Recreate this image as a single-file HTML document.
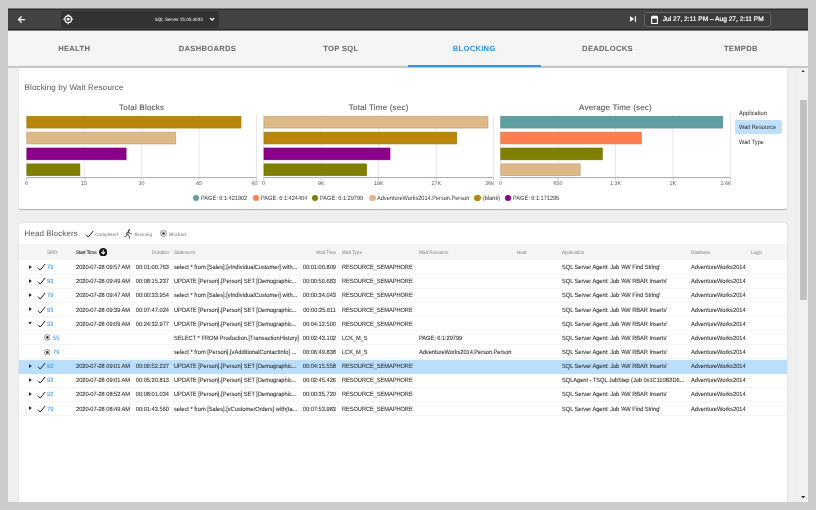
<!DOCTYPE html>
<html><head><meta charset="utf-8"><title>Blocking</title>
<style>
*{box-sizing:border-box;margin:0;padding:0}
html,body{text-rendering:geometricPrecision;width:816px;height:510px;overflow:hidden;background:#cccccc;font-family:"Liberation Sans", sans-serif;}
.a{position:absolute}
.t{position:absolute;white-space:nowrap;line-height:1}
#app{will-change:transform;position:absolute;left:8px;top:8px;width:800px;height:494px;background:#efefef;overflow:hidden}
#top{z-index:2;position:absolute;left:0;top:0;width:800px;height:24px}
#tabs{position:absolute;left:0;top:22px;width:800px;height:36px;background:#f5f5f5}
#tabline{z-index:5;position:absolute;left:0;top:57.6px;width:800px;height:2.1px;background:#c6c6c6}
.tab{position:absolute;top:0;width:133.33px;height:36px;text-align:center;font-weight:bold;font-size:7.6px;letter-spacing:.3px;color:#666;line-height:37px}
.tab.on{color:#2c92e8}
.card{position:absolute;background:#fff;border-radius:2px;box-shadow:0 .6px 1.2px rgba(0,0,0,.28)}
.bar{position:absolute;height:12.5px;border:.6px solid rgba(0,0,0,.13)}
.grid{position:absolute;width:.7px;background:#e9e9e9}
.axis{position:absolute;height:.9px;background:#a0a0a0}
.tick{position:absolute;width:.6px;height:1.6px;background:#aaa}
.tl{position:absolute;font-size:5.4px;color:#555;white-space:nowrap;line-height:1;transform:translateX(-50%)}
.ct{position:absolute;font-size:8px;letter-spacing:.2px;color:#555;-webkit-text-stroke:.1px #555;white-space:nowrap;line-height:1;transform:translateX(-50%)}
.dot{position:absolute;width:6.6px;height:6.6px;border-radius:50%}
.lg{position:absolute;font-size:6.1px;color:#333;transform:scaleX(.918);transform-origin:0 50%;white-space:nowrap;line-height:1}
.row{position:absolute;left:11px;width:768px;height:14.2px;border-bottom:.6px solid #f5f5f5}
.c{position:absolute;font-size:6.1px;color:#303030;-webkit-text-stroke:.08px currentColor;transform:scaleX(.934);transform-origin:0 50%;white-space:nowrap;line-height:1}
.h{position:absolute;font-size:5.1px;color:#828282;transform:scaleX(.89);transform-origin:0 50%;white-space:nowrap;line-height:1}
.r{transform:translateX(-100%)}
.c.r{transform:translateX(-100%) scaleX(.934);transform-origin:100% 50%}
.h.r{transform:translateX(-100%) scaleX(.89);transform-origin:100% 50%}
.b{color:#3f9dee}
</style></head>
<body>
<div id="app">
<div id="top">
<svg class="a" style="left:0;top:0;width:800px;height:24px" viewBox="0 0 800 24"><rect x="0" y="0.4" width="800" height="22" fill="#434343"/><rect x="0" y="0.85" width="800" height="1.1" fill="#2e2e2e"/><rect x="0" y="20.9" width="800" height="1.5" fill="#2c2c2c"/></svg>
<svg class="a" style="left:9.4px;top:6.9px;width:9.2px;height:9.2px" viewBox="0 0 24 24"><path d="M21 12H4.5M12 4l-8 8 8 8" fill="none" stroke="#fff" stroke-width="3.4"/></svg>
<div class="a" style="left:53px;top:2.7px;width:158px;height:17px;background:#333;border-radius:2px"></div>
<svg class="a" style="left:54.5px;top:6.3px;width:10.4px;height:10.4px" viewBox="0 0 24 24"><circle cx="12" cy="12" r="7.6" fill="none" stroke="#fff" stroke-width="2.8"/><circle cx="12" cy="12" r="3.3" fill="#fff"/><path d="M12 .6v3.6M12 19.8v3.6M.6 12h3.6M19.8 12h3.6" stroke="#fff" stroke-width="2.8"/></svg>
<div class="t" style="left:146.7px;top:10.3px;font-size:4.6px;color:#f2f2f2">SQL Server 15.00.4033</div>
<svg class="a" style="left:201.4px;top:8.1px;width:6.2px;height:6.2px" viewBox="0 0 24 24"><path d="M4 8l8 8 8-8" fill="none" stroke="#fff" stroke-width="5"/></svg>
<svg class="a" style="left:621.6px;top:8.4px;width:6.5px;height:6px" viewBox="0 0 14 12"><path d="M0 0l9 6-9 6z" fill="#fff"/><rect x="10.5" y="0" width="2.6" height="12" fill="#fff"/></svg>
<div class="a" style="left:636px;top:4px;width:127.3px;height:15.3px;border:.8px solid #646464;border-radius:3px;background:#3c3c3c"></div>
<svg class="a" style="left:642.6px;top:6.5px;width:7px;height:9.6px" viewBox="0 0 14 19"><rect x="1.2" y="3.2" width="11.6" height="14" rx="1.5" fill="none" stroke="#fff" stroke-width="2.2"/><rect x="1.2" y="3.2" width="11.6" height="4" fill="#fff"/><rect x="3.2" y="0.5" width="2" height="4" fill="#fff"/><rect x="8.8" y="0.5" width="2" height="4" fill="#fff"/></svg>
<div class="t" style="left:654.8px;top:9.2px;font-size:6.6px;color:#fff;-webkit-text-stroke:.22px #fff">Jul 27, 2:11 PM &ndash; Aug 27, 2:11 PM</div>
</div>
<div id="tabs">
<div class="tab" style="left:-0.50px">HEALTH</div>
<div class="tab" style="left:132.83px">DASHBOARDS</div>
<div class="tab" style="left:266.17px">TOP SQL</div>
<div class="tab on" style="left:399.50px">BLOCKING</div>
<div class="tab" style="left:532.83px">DEADLOCKS</div>
<div class="tab" style="left:666.16px">TEMPDB</div>
</div>
<div id="tabline"></div>
<div class="a" style="z-index:6;left:399.6px;top:56.6px;width:133.5px;height:2.3px;background:#3394e6"></div>
<div class="a" style="left:791px;top:60px;width:9px;height:434px;background:#f1f1f1"></div>
<div class="a" style="left:791.5px;top:92px;width:7.6px;height:200.4px;background:#c1c1c1"></div>
<svg class="a" style="left:793.2px;top:61.8px;width:4.2px;height:2.5px" viewBox="0 0 10 6"><path d="M0 6l5-6 5 6z" fill="#333"/></svg>
<svg class="a" style="left:793.2px;top:487.8px;width:4.2px;height:2.5px" viewBox="0 0 10 6"><path d="M0 0l5 6 5-6z" fill="#333"/></svg>
<div class="card" style="left:11px;top:58px;width:768px;height:143px;border-radius:0 0 2px 2px"></div>
<div class="t" style="left:16.5px;top:75.6px;font-size:8px;letter-spacing:.15px;color:#555">Blocking by Wait Resource</div>
<div class="ct" style="left:133.6px;top:95.9px">Total Blocks</div>
<div class="tl" style="left:18.60px;top:173.5px">0</div>
<div class="tl" style="left:76.10px;top:173.5px">15</div>
<div class="tl" style="left:133.60px;top:173.5px">30</div>
<div class="tl" style="left:191.10px;top:173.5px">45</div>
<div class="tl" style="left:249.60px;top:173.5px;transform:translateX(-100%)">60</div>
<div class="ct" style="left:370.7px;top:95.9px">Total Time (sec)</div>
<div class="tl" style="left:255.70px;top:173.5px">0</div>
<div class="tl" style="left:313.20px;top:173.5px">9K</div>
<div class="tl" style="left:370.70px;top:173.5px">18K</div>
<div class="tl" style="left:428.20px;top:173.5px">27K</div>
<div class="tl" style="left:486.70px;top:173.5px;transform:translateX(-100%)">36K</div>
<div class="ct" style="left:607.5px;top:95.9px">Average Time (sec)</div>
<div class="tl" style="left:492.50px;top:173.5px">0</div>
<div class="tl" style="left:550.00px;top:173.5px">650</div>
<div class="tl" style="left:607.50px;top:173.5px">1.3K</div>
<div class="tl" style="left:665.00px;top:173.5px">2K</div>
<div class="tl" style="left:723.50px;top:173.5px;transform:translateX(-100%)">2.6K</div>
<svg class="a" style="left:0;top:0;width:800px;height:494px" viewBox="0 0 800 494"><rect x="18.25" y="106.4" width=".7" height="63" fill="#dedede"/><rect x="18.30" y="170" width=".6" height="1.6" fill="#aaa"/><rect x="75.75" y="106.4" width=".7" height="63" fill="#dedede"/><rect x="75.80" y="170" width=".6" height="1.6" fill="#aaa"/><rect x="133.25" y="106.4" width=".7" height="63" fill="#dedede"/><rect x="133.30" y="170" width=".6" height="1.6" fill="#aaa"/><rect x="190.75" y="106.4" width=".7" height="63" fill="#dedede"/><rect x="190.80" y="170" width=".6" height="1.6" fill="#aaa"/><rect x="248.25" y="106.4" width=".7" height="63" fill="#dedede"/><rect x="248.30" y="170" width=".6" height="1.6" fill="#aaa"/><rect x="18.6" y="169.2" width="230" height=".9" fill="#a0a0a0"/><rect x="18.90" y="108.25" width="214.10" height="11.8" fill="#b8860b" stroke="#b8860b" stroke-width=".6"/><rect x="18.90" y="108.25" width="214.10" height="11.8" fill="none" stroke="rgba(0,0,0,.13)" stroke-width=".6"/><rect x="18.90" y="124.13" width="148.90" height="11.8" fill="#deb887" stroke="#deb887" stroke-width=".6"/><rect x="18.90" y="124.13" width="148.90" height="11.8" fill="none" stroke="rgba(0,0,0,.13)" stroke-width=".6"/><rect x="18.90" y="140.01" width="99.20" height="11.8" fill="#8b008b" stroke="#8b008b" stroke-width=".6"/><rect x="18.90" y="140.01" width="99.20" height="11.8" fill="none" stroke="rgba(0,0,0,.13)" stroke-width=".6"/><rect x="18.90" y="155.89" width="53.00" height="11.8" fill="#808000" stroke="#808000" stroke-width=".6"/><rect x="18.90" y="155.89" width="53.00" height="11.8" fill="none" stroke="rgba(0,0,0,.13)" stroke-width=".6"/><rect x="255.35" y="106.4" width=".7" height="63" fill="#dedede"/><rect x="255.40" y="170" width=".6" height="1.6" fill="#aaa"/><rect x="312.85" y="106.4" width=".7" height="63" fill="#dedede"/><rect x="312.90" y="170" width=".6" height="1.6" fill="#aaa"/><rect x="370.35" y="106.4" width=".7" height="63" fill="#dedede"/><rect x="370.40" y="170" width=".6" height="1.6" fill="#aaa"/><rect x="427.85" y="106.4" width=".7" height="63" fill="#dedede"/><rect x="427.90" y="170" width=".6" height="1.6" fill="#aaa"/><rect x="485.35" y="106.4" width=".7" height="63" fill="#dedede"/><rect x="485.40" y="170" width=".6" height="1.6" fill="#aaa"/><rect x="255.7" y="169.2" width="230" height=".9" fill="#a0a0a0"/><rect x="256.00" y="108.25" width="224.00" height="11.8" fill="#deb887" stroke="#deb887" stroke-width=".6"/><rect x="256.00" y="108.25" width="224.00" height="11.8" fill="none" stroke="rgba(0,0,0,.13)" stroke-width=".6"/><rect x="256.00" y="124.13" width="192.70" height="11.8" fill="#b8860b" stroke="#b8860b" stroke-width=".6"/><rect x="256.00" y="124.13" width="192.70" height="11.8" fill="none" stroke="rgba(0,0,0,.13)" stroke-width=".6"/><rect x="256.00" y="140.01" width="126.00" height="11.8" fill="#8b008b" stroke="#8b008b" stroke-width=".6"/><rect x="256.00" y="140.01" width="126.00" height="11.8" fill="none" stroke="rgba(0,0,0,.13)" stroke-width=".6"/><rect x="256.00" y="155.89" width="102.60" height="11.8" fill="#808000" stroke="#808000" stroke-width=".6"/><rect x="256.00" y="155.89" width="102.60" height="11.8" fill="none" stroke="rgba(0,0,0,.13)" stroke-width=".6"/><rect x="492.15" y="106.4" width=".7" height="63" fill="#dedede"/><rect x="492.20" y="170" width=".6" height="1.6" fill="#aaa"/><rect x="549.65" y="106.4" width=".7" height="63" fill="#dedede"/><rect x="549.70" y="170" width=".6" height="1.6" fill="#aaa"/><rect x="607.15" y="106.4" width=".7" height="63" fill="#dedede"/><rect x="607.20" y="170" width=".6" height="1.6" fill="#aaa"/><rect x="664.65" y="106.4" width=".7" height="63" fill="#dedede"/><rect x="664.70" y="170" width=".6" height="1.6" fill="#aaa"/><rect x="722.15" y="106.4" width=".7" height="63" fill="#dedede"/><rect x="722.20" y="170" width=".6" height="1.6" fill="#aaa"/><rect x="492.5" y="169.2" width="230" height=".9" fill="#a0a0a0"/><rect x="492.80" y="108.25" width="222.00" height="11.8" fill="#5f9ea0" stroke="#5f9ea0" stroke-width=".6"/><rect x="492.80" y="108.25" width="222.00" height="11.8" fill="none" stroke="rgba(0,0,0,.13)" stroke-width=".6"/><rect x="492.80" y="124.13" width="140.50" height="11.8" fill="#ff7f50" stroke="#ff7f50" stroke-width=".6"/><rect x="492.80" y="124.13" width="140.50" height="11.8" fill="none" stroke="rgba(0,0,0,.13)" stroke-width=".6"/><rect x="492.80" y="140.01" width="101.50" height="11.8" fill="#808000" stroke="#808000" stroke-width=".6"/><rect x="492.80" y="140.01" width="101.50" height="11.8" fill="none" stroke="rgba(0,0,0,.13)" stroke-width=".6"/><rect x="492.80" y="155.89" width="79.40" height="11.8" fill="#deb887" stroke="#deb887" stroke-width=".6"/><rect x="492.80" y="155.89" width="79.40" height="11.8" fill="none" stroke="rgba(0,0,0,.13)" stroke-width=".6"/></svg>
<div class="dot" style="left:184.6px;top:186.9px;background:#5f9ea0"></div>
<div class="lg" style="left:192.9px;top:187.6px">PAGE: 6:1:421902</div>
<div class="dot" style="left:244.7px;top:186.9px;background:#ff7f50"></div>
<div class="lg" style="left:253.0px;top:187.6px">PAGE: 6:1:424404</div>
<div class="dot" style="left:303.8px;top:186.9px;background:#808000"></div>
<div class="lg" style="left:312.3px;top:187.6px">PAGE: 6:1:29799</div>
<div class="dot" style="left:361.0px;top:186.9px;background:#deb887"></div>
<div class="lg" style="left:368.8px;top:187.6px">AdventureWorks2014.Person.Person</div>
<div class="dot" style="left:466.4px;top:186.9px;background:#b8860b"></div>
<div class="lg" style="left:474.9px;top:187.6px">(blank)</div>
<div class="dot" style="left:496.8px;top:186.9px;background:#8b008b"></div>
<div class="lg" style="left:505.0px;top:187.6px">PAGE: 6:1:171295</div>
<div class="a" style="left:727.3px;top:112.2px;width:46.7px;height:13.6px;background:#bfdffb;border-radius:2px"></div>
<div class="t" style="left:731.1px;top:103.0px;font-size:6.1px;color:#2a2a2a;transform:scaleX(.934);transform-origin:0 50%">Application</div>
<div class="t" style="left:731.1px;top:117.3px;font-size:6.1px;color:#2a2a2a;transform:scaleX(.934);transform-origin:0 50%">Wait Resource</div>
<div class="t" style="left:731.1px;top:131.6px;font-size:6.1px;color:#2a2a2a;transform:scaleX(.934);transform-origin:0 50%">Wait Type</div>
<div class="card" style="left:11px;top:215px;width:768px;height:290px"></div>
<div class="t" style="left:16.5px;top:222.1px;font-size:8px;letter-spacing:.1px;color:#555">Head Blockers</div>
<svg class="a" style="left:77.4px;top:222.4px;width:8.8px;height:7.5px" viewBox="0 0 14 12"><path d="M1.5 7.5l3.6 3.8L13 1.6" fill="none" stroke="#222" stroke-width="1.6"/></svg>
<div class="t" style="left:87.2px;top:224.8px;font-size:4.7px;color:#777">Completed</div>
<svg class="a" style="left:116.4px;top:220.8px;width:8.4px;height:9.8px" viewBox="0 0 24 28"><circle cx="14.5" cy="3.5" r="2.6" fill="#333"/><path d="M13 8l-5 2.5-1.5 5M13 8l-2.5 8 4.5 4 1 6.5M10.5 16L7 20.5 2.5 21M13 8l4 5 4.5 1" fill="none" stroke="#333" stroke-width="2.4" stroke-linecap="round" stroke-linejoin="round"/></svg>
<div class="t" style="left:126.6px;top:224.8px;font-size:4.7px;color:#777">Running</div>
<svg class="a" style="left:151.5px;top:222.2px;width:7px;height:7px" viewBox="0 0 14 14"><circle cx="7" cy="7" r="5.8" fill="none" stroke="#3a3a3a" stroke-width="1.15"/><circle cx="7" cy="7" r="2.7" fill="#333"/></svg>
<div class="t" style="left:161.2px;top:224.8px;font-size:4.7px;color:#777">Blocked</div>
<div class="a" style="left:11px;top:235.8px;width:768px;height:16.6px;background:#f5f5f5"></div>
<div class="h" style="left:39.1px;top:243.0px">SPID</div>
<div class="h" style="left:68px;top:243.0px;color:#2a2a2a;-webkit-text-stroke:.12px #2a2a2a">Start Time</div>
<svg class="a" style="left:91.1px;top:240.0px;width:8.4px;height:8.4px" viewBox="0 0 24 24"><circle cx="12" cy="12" r="12" fill="#111"/><path d="M12 5v11M6.5 11.5L12 17l5.5-5.5" fill="none" stroke="#fff" stroke-width="3"/></svg>
<div class="h r" style="left:160.5px;top:243.0px">Duration</div>
<div class="h" style="left:166.3px;top:243.0px">Statement</div>
<div class="h r" style="left:328.2px;top:243.0px">Wait Time</div>
<div class="h" style="left:334.3px;top:243.0px">Wait Type</div>
<div class="h" style="left:410.8px;top:243.0px">Wait Resource</div>
<div class="h" style="left:509.29999999999995px;top:243.0px">Host</div>
<div class="h" style="left:553.8px;top:243.0px">Application</div>
<div class="h" style="left:683.1px;top:243.0px">Database</div>
<div class="h" style="left:743px;top:243.0px">Login</div>
<div class="row" style="top:252.40px;"></div>
<svg class="a" style="left:20.8px;top:256.6px;width:2.9px;height:4.2px" viewBox="0 0 6 8"><path d="M0 0l6 4-6 4z" fill="#222"/></svg>
<svg class="a" style="left:28.8px;top:255.2px;width:8.8px;height:7.5px" viewBox="0 0 14 12"><path d="M1.5 7.5l3.6 3.8L13 1.6" fill="none" stroke="#222" stroke-width="1.6"/></svg>
<div class="c b" style="left:39.1px;top:257.1px">79</div>
<div class="c" style="left:68px;top:257.1px;letter-spacing:-.04px">2020-07-28 09:57 AM</div>
<div class="c r" style="left:160.5px;top:257.1px">00:01:00.763</div>
<div class="c" style="left:166.3px;top:257.1px">select * from [Sales].[vIndividualCustomer] with...</div>
<div class="c r" style="left:328.2px;top:257.1px">00:01:00.809</div>
<div class="c" style="left:334.3px;top:257.1px;letter-spacing:-.07px">RESOURCE_SEMAPHORE</div>
<div class="c" style="left:553.8px;top:257.1px;letter-spacing:-.04px">SQL Server Agent: Job 'AW Find String'</div>
<div class="c" style="left:683.1px;top:257.1px">AdventureWorks2014</div>
<div class="row" style="top:266.55px;"></div>
<svg class="a" style="left:20.8px;top:270.8px;width:2.9px;height:4.2px" viewBox="0 0 6 8"><path d="M0 0l6 4-6 4z" fill="#222"/></svg>
<svg class="a" style="left:28.8px;top:269.4px;width:8.8px;height:7.5px" viewBox="0 0 14 12"><path d="M1.5 7.5l3.6 3.8L13 1.6" fill="none" stroke="#222" stroke-width="1.6"/></svg>
<div class="c b" style="left:39.1px;top:271.2px">93</div>
<div class="c" style="left:68px;top:271.2px;letter-spacing:-.04px">2020-07-28 09:49 AM</div>
<div class="c r" style="left:160.5px;top:271.2px">00:08:15.237</div>
<div class="c" style="left:166.3px;top:271.2px">UPDATE [Person].[Person] SET [Demographic...</div>
<div class="c r" style="left:328.2px;top:271.2px">00:00:50.683</div>
<div class="c" style="left:334.3px;top:271.2px;letter-spacing:-.07px">RESOURCE_SEMAPHORE</div>
<div class="c" style="left:553.8px;top:271.2px;letter-spacing:-.04px">SQL Server Agent: Job 'AW RBAR Inserts'</div>
<div class="c" style="left:683.1px;top:271.2px">AdventureWorks2014</div>
<div class="row" style="top:280.70px;"></div>
<svg class="a" style="left:20.8px;top:284.9px;width:2.9px;height:4.2px" viewBox="0 0 6 8"><path d="M0 0l6 4-6 4z" fill="#222"/></svg>
<svg class="a" style="left:28.8px;top:283.5px;width:8.8px;height:7.5px" viewBox="0 0 14 12"><path d="M1.5 7.5l3.6 3.8L13 1.6" fill="none" stroke="#222" stroke-width="1.6"/></svg>
<div class="c b" style="left:39.1px;top:285.4px">79</div>
<div class="c" style="left:68px;top:285.4px;letter-spacing:-.04px">2020-07-28 09:47 AM</div>
<div class="c r" style="left:160.5px;top:285.4px">00:00:33.954</div>
<div class="c" style="left:166.3px;top:285.4px">select * from [Sales].[vIndividualCustomer] with...</div>
<div class="c r" style="left:328.2px;top:285.4px">00:00:34.043</div>
<div class="c" style="left:334.3px;top:285.4px;letter-spacing:-.07px">RESOURCE_SEMAPHORE</div>
<div class="c" style="left:553.8px;top:285.4px;letter-spacing:-.04px">SQL Server Agent: Job 'AW Find String'</div>
<div class="c" style="left:683.1px;top:285.4px">AdventureWorks2014</div>
<div class="row" style="top:294.85px;"></div>
<svg class="a" style="left:20.8px;top:299.1px;width:2.9px;height:4.2px" viewBox="0 0 6 8"><path d="M0 0l6 4-6 4z" fill="#222"/></svg>
<svg class="a" style="left:28.8px;top:297.7px;width:8.8px;height:7.5px" viewBox="0 0 14 12"><path d="M1.5 7.5l3.6 3.8L13 1.6" fill="none" stroke="#222" stroke-width="1.6"/></svg>
<div class="c b" style="left:39.1px;top:299.6px">93</div>
<div class="c" style="left:68px;top:299.6px;letter-spacing:-.04px">2020-07-28 09:39 AM</div>
<div class="c r" style="left:160.5px;top:299.6px">00:07:47.024</div>
<div class="c" style="left:166.3px;top:299.6px">UPDATE [Person].[Person] SET [Demographic...</div>
<div class="c r" style="left:328.2px;top:299.6px">00:00:25.611</div>
<div class="c" style="left:334.3px;top:299.6px;letter-spacing:-.07px">RESOURCE_SEMAPHORE</div>
<div class="c" style="left:553.8px;top:299.6px;letter-spacing:-.04px">SQL Server Agent: Job 'AW RBAR Inserts'</div>
<div class="c" style="left:683.1px;top:299.6px">AdventureWorks2014</div>
<div class="row" style="top:309.00px;"></div>
<svg class="a" style="left:20.1px;top:314.3px;width:4.2px;height:2.6px" viewBox="0 0 8 6"><path d="M0 0l4 6 4-6z" fill="#222"/></svg>
<svg class="a" style="left:28.8px;top:311.8px;width:8.8px;height:7.5px" viewBox="0 0 14 12"><path d="M1.5 7.5l3.6 3.8L13 1.6" fill="none" stroke="#222" stroke-width="1.6"/></svg>
<div class="c b" style="left:39.1px;top:313.7px">92</div>
<div class="c" style="left:68px;top:313.7px;letter-spacing:-.04px">2020-07-28 09:09 AM</div>
<div class="c r" style="left:160.5px;top:313.7px">00:24:32.977</div>
<div class="c" style="left:166.3px;top:313.7px">UPDATE [Person].[Person] SET [Demographic...</div>
<div class="c r" style="left:328.2px;top:313.7px">00:04:12.500</div>
<div class="c" style="left:334.3px;top:313.7px;letter-spacing:-.07px">RESOURCE_SEMAPHORE</div>
<div class="c" style="left:553.8px;top:313.7px;letter-spacing:-.04px">SQL Server Agent: Job 'AW RBAR Inserts'</div>
<div class="c" style="left:683.1px;top:313.7px">AdventureWorks2014</div>
<div class="row" style="top:323.15px;"></div>
<svg class="a" style="left:35.5px;top:326.4px;width:6.8px;height:6.8px" viewBox="0 0 14 14"><circle cx="7" cy="7" r="5.8" fill="none" stroke="#3a3a3a" stroke-width="1.15"/><circle cx="7" cy="7" r="2.7" fill="#333"/></svg>
<div class="c b" style="left:44.8px;top:327.8px">55</div>
<div class="c" style="left:166.3px;top:327.8px">SELECT * FROM Production.[TransactionHistory]</div>
<div class="c r" style="left:328.2px;top:327.8px">00:02:43.102</div>
<div class="c" style="left:334.3px;top:327.8px;letter-spacing:-.07px">LCK_M_S</div>
<div class="c" style="left:410.8px;top:327.8px;letter-spacing:-.05px">PAGE: 6:1:29799</div>
<div class="c" style="left:553.8px;top:327.8px;letter-spacing:-.04px">SQL Server Agent: Job 'AW RBAR Inserts'</div>
<div class="c" style="left:683.1px;top:327.8px">AdventureWorks2014</div>
<div class="row" style="top:337.30px;"></div>
<svg class="a" style="left:35.5px;top:340.5px;width:6.8px;height:6.8px" viewBox="0 0 14 14"><circle cx="7" cy="7" r="5.8" fill="none" stroke="#3a3a3a" stroke-width="1.15"/><circle cx="7" cy="7" r="2.7" fill="#333"/></svg>
<div class="c b" style="left:44.8px;top:342.0px">79</div>
<div class="c" style="left:166.3px;top:342.0px">select * from [Person].[vAdditionalContactInfo] ...</div>
<div class="c r" style="left:328.2px;top:342.0px">00:06:49.838</div>
<div class="c" style="left:334.3px;top:342.0px;letter-spacing:-.07px">LCK_M_S</div>
<div class="c" style="left:410.8px;top:342.0px;letter-spacing:-.05px">AdventureWorks2014.Person.Person</div>
<div class="c" style="left:553.8px;top:342.0px;letter-spacing:-.04px">SQL Server Agent: Job 'AW RBAR Inserts'</div>
<div class="c" style="left:683.1px;top:342.0px">AdventureWorks2014</div>
<div class="row" style="top:351.45px;background:#bbdefb;border-bottom-color:#bbdefb;margin-top:.6px;height:13.7px;"></div>
<svg class="a" style="left:20.8px;top:355.6px;width:2.9px;height:4.2px" viewBox="0 0 6 8"><path d="M0 0l6 4-6 4z" fill="#222"/></svg>
<svg class="a" style="left:28.8px;top:354.2px;width:8.8px;height:7.5px" viewBox="0 0 14 12"><path d="M1.5 7.5l3.6 3.8L13 1.6" fill="none" stroke="#222" stroke-width="1.6"/></svg>
<div class="c b" style="left:39.1px;top:356.1px">92</div>
<div class="c" style="left:68px;top:356.1px;letter-spacing:-.04px">2020-07-28 09:01 AM</div>
<div class="c r" style="left:160.5px;top:356.1px">00:06:52.227</div>
<div class="c" style="left:166.3px;top:356.1px">UPDATE [Person].[Person] SET [Demographic...</div>
<div class="c r" style="left:328.2px;top:356.1px">00:04:15.558</div>
<div class="c" style="left:334.3px;top:356.1px;letter-spacing:-.07px">RESOURCE_SEMAPHORE</div>
<div class="c" style="left:553.8px;top:356.1px;letter-spacing:-.04px">SQL Server Agent: Job 'AW RBAR Inserts'</div>
<div class="c" style="left:683.1px;top:356.1px">AdventureWorks2014</div>
<div class="row" style="top:365.60px;"></div>
<svg class="a" style="left:20.8px;top:369.8px;width:2.9px;height:4.2px" viewBox="0 0 6 8"><path d="M0 0l6 4-6 4z" fill="#222"/></svg>
<svg class="a" style="left:28.8px;top:368.4px;width:8.8px;height:7.5px" viewBox="0 0 14 12"><path d="M1.5 7.5l3.6 3.8L13 1.6" fill="none" stroke="#222" stroke-width="1.6"/></svg>
<div class="c b" style="left:39.1px;top:370.3px">92</div>
<div class="c" style="left:68px;top:370.3px;letter-spacing:-.04px">2020-07-28 09:01 AM</div>
<div class="c r" style="left:160.5px;top:370.3px">00:05:20.813</div>
<div class="c" style="left:166.3px;top:370.3px">UPDATE [Person].[Person] SET [Demographic...</div>
<div class="c r" style="left:328.2px;top:370.3px">00:02:45.426</div>
<div class="c" style="left:334.3px;top:370.3px;letter-spacing:-.07px">RESOURCE_SEMAPHORE</div>
<div class="c" style="left:553.8px;top:370.3px;letter-spacing:-.04px">SQLAgent - TSQL JobStep (Job 0x1C110B2D6...</div>
<div class="c" style="left:683.1px;top:370.3px">AdventureWorks2014</div>
<div class="row" style="top:379.75px;"></div>
<svg class="a" style="left:20.8px;top:383.9px;width:2.9px;height:4.2px" viewBox="0 0 6 8"><path d="M0 0l6 4-6 4z" fill="#222"/></svg>
<svg class="a" style="left:28.8px;top:382.6px;width:8.8px;height:7.5px" viewBox="0 0 14 12"><path d="M1.5 7.5l3.6 3.8L13 1.6" fill="none" stroke="#222" stroke-width="1.6"/></svg>
<div class="c b" style="left:39.1px;top:384.4px">92</div>
<div class="c" style="left:68px;top:384.4px;letter-spacing:-.04px">2020-07-28 08:52 AM</div>
<div class="c r" style="left:160.5px;top:384.4px">00:08:01.034</div>
<div class="c" style="left:166.3px;top:384.4px">UPDATE [Person].[Person] SET [Demographic...</div>
<div class="c r" style="left:328.2px;top:384.4px">00:00:35.720</div>
<div class="c" style="left:334.3px;top:384.4px;letter-spacing:-.07px">RESOURCE_SEMAPHORE</div>
<div class="c" style="left:553.8px;top:384.4px;letter-spacing:-.04px">SQL Server Agent: Job 'AW RBAR Inserts'</div>
<div class="c" style="left:683.1px;top:384.4px">AdventureWorks2014</div>
<div class="row" style="top:393.90px;"></div>
<svg class="a" style="left:20.8px;top:398.1px;width:2.9px;height:4.2px" viewBox="0 0 6 8"><path d="M0 0l6 4-6 4z" fill="#222"/></svg>
<svg class="a" style="left:28.8px;top:396.7px;width:8.8px;height:7.5px" viewBox="0 0 14 12"><path d="M1.5 7.5l3.6 3.8L13 1.6" fill="none" stroke="#222" stroke-width="1.6"/></svg>
<div class="c b" style="left:39.1px;top:398.6px">79</div>
<div class="c" style="left:68px;top:398.6px;letter-spacing:-.04px">2020-07-28 08:49 AM</div>
<div class="c r" style="left:160.5px;top:398.6px">00:01:43.560</div>
<div class="c" style="left:166.3px;top:398.6px">select * from [Sales].[vCustomerOrders] with(ta...</div>
<div class="c r" style="left:328.2px;top:398.6px">00:07:53.983</div>
<div class="c" style="left:334.3px;top:398.6px;letter-spacing:-.07px">RESOURCE_SEMAPHORE</div>
<div class="c" style="left:553.8px;top:398.6px;letter-spacing:-.04px">SQL Server Agent: Job 'AW Find String'</div>
<div class="c" style="left:683.1px;top:398.6px">AdventureWorks2014</div>
</div>
</body></html>
